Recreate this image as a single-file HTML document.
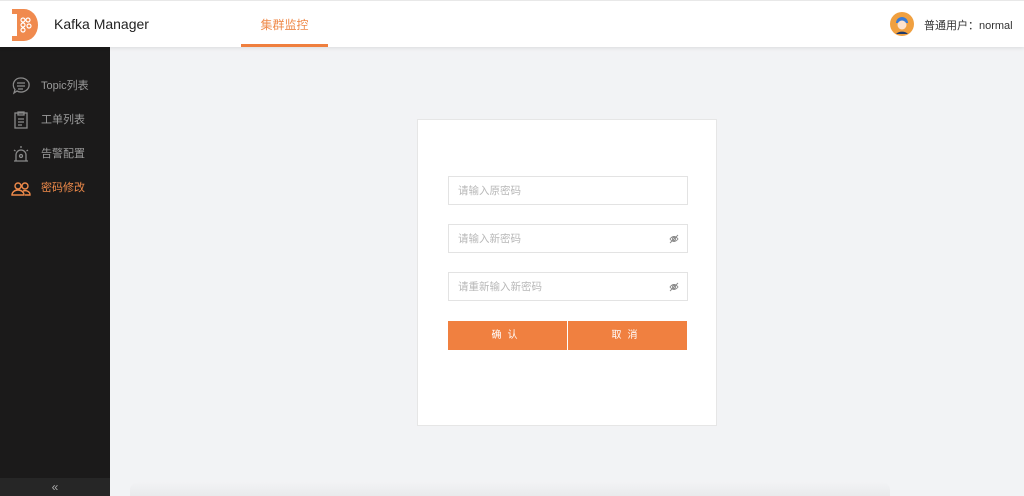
<!DOCTYPE html>
<html><head><meta charset="utf-8"><style>
*{margin:0;padding:0;box-sizing:border-box}
body{width:1024px;height:496px;overflow:hidden;background:#f2f3f5;font-family:"Liberation Sans","Noto Sans CJK SC",sans-serif;position:relative}
.hdr{position:absolute;left:0;top:0;width:1024px;height:47px;background:#fff;border-top:1px solid #e8e8e8;box-shadow:0 1px 4px rgba(0,0,0,.1);z-index:2}
.title{position:absolute;left:54px;top:15px;font-size:14px;color:#222}
.tab{position:absolute;left:241px;top:15px;width:87px;text-align:center;font-size:12px;color:#ef8a4a}
.tabline{position:absolute;left:241px;top:43px;width:87px;height:3px;background:#ef7f3e}
.user{position:absolute;left:924px;top:16px;font-size:11px;color:#333}
.side{position:absolute;left:0;top:47px;width:110px;height:449px;background:#1b1a1a}
.item{position:absolute;left:0;width:110px;height:20px;font-size:11px;color:#9a9a9a}
.item span{position:absolute;left:41px;top:1px}
.item svg{position:absolute;left:11px;top:0}
.coll{position:absolute;left:0;top:431px;width:110px;height:18px;background:#262626;color:#aaa;font-size:12px;text-align:center;line-height:18px}
.card{position:absolute;left:417px;top:119px;width:300px;height:307px;background:#fff;border:1px solid #e6e6e6}
.inp{position:absolute;left:30px;width:240px;height:29px;border:1px solid #e3e3e3;font-size:10.5px;color:#b8b8b8;padding:6px 0 0 9px}
.eye{position:absolute;right:8px;top:9px}
.btn{position:absolute;top:201px;width:119px;height:29px;background:#f08040;color:#fff;font-size:10px;text-align:center;line-height:29px;letter-spacing:6px}
.shadow{position:absolute;left:130px;top:482px;width:760px;height:14px;background:linear-gradient(#f2f3f5,#e9eaec);border-radius:8px 8px 0 0}
</style></head><body>
<div class="hdr">
<svg style="position:absolute;left:12px;top:8px" width="28" height="32" viewBox="0 0 28 32"><path d="M0 0h12a14 16 0 0 1 0 32H0z" fill="#f08a4e"/><path d="M0 5h5v22H0z" fill="#fff"/><g fill="none" stroke="#fff" stroke-width="1.2"><circle cx="11" cy="11" r="2"/><circle cx="16" cy="11" r="2"/><circle cx="11" cy="16" r="2"/><circle cx="17" cy="17" r="2"/><circle cx="11" cy="21" r="2"/></g></svg>
<div class="title">Kafka Manager</div>
<div class="tab">集群监控</div><div class="tabline"></div>
<svg style="position:absolute;left:890px;top:11px" width="24" height="24" viewBox="0 0 24 24"><circle cx="12" cy="12" r="12" fill="#f0a040"/><path d="M6 11a6 6 0 0 1 12 0z" fill="#3a7bd5"/><circle cx="12" cy="13" r="4.5" fill="#fde3cf"/><path d="M6 22a7 5 0 0 1 12 0z" fill="#1e3a6b"/></svg>
<div class="user">普通用户：normal</div>
</div>
<div class="side">
<div class="item" style="top:29px"><svg width="20" height="20" viewBox="0 0 20 20" fill="none" stroke="#8a8a8a" stroke-width="1.3"><path d="M10 2a8 7 0 1 1-4 13l-3 2 1-3.5A7 7 0 0 1 10 2z"/><path d="M6 7h8M6 10h8M7 13h5"/></svg><span>Topic列表</span></div>
<div class="item" style="top:63px"><svg width="20" height="20" viewBox="0 0 20 20" fill="none" stroke="#8a8a8a" stroke-width="1.3"><rect x="4" y="3" width="12" height="15"/><path d="M7 2h6v3H7zM7 9h6M7 12h6M7 15h4"/></svg><span>工单列表</span></div>
<div class="item" style="top:97px"><svg width="20" height="20" viewBox="0 0 20 20" fill="none" stroke="#8a8a8a" stroke-width="1.3"><path d="M5 17v-6a5 5 0 0 1 10 0v6M3 17h14M10 2v2M3 6l1.5 1M17 6l-1.5 1"/><circle cx="10" cy="12" r="1.5"/></svg><span>告警配置</span></div>
<div class="item" style="top:131px;color:#ef8a4a"><svg width="20" height="20" viewBox="0 0 20 20" fill="none" stroke="#ef8a4a" stroke-width="1.4"><circle cx="7" cy="8" r="3"/><circle cx="14" cy="8" r="3"/><path d="M1 17a6 5 0 0 1 12 0zM12 13a5 4 0 0 1 7 4h-5"/></svg><span>密码修改</span></div>
<div class="coll">«</div>
</div>
<div class="shadow"></div>
<div class="card">
<div class="inp" style="top:56px">请输入原密码</div>
<div class="inp" style="top:104px">请输入新密码<svg class="eye" width="10" height="10" viewBox="0 0 10 10" fill="none" stroke="#888" stroke-width="0.9"><path d="M1 5q4-5 8 0q-4 5-8 0z"/><circle cx="5" cy="5" r="1.5"/><path d="M1 9L9 1"/></svg></div>
<div class="inp" style="top:152px">请重新输入新密码<svg class="eye" width="10" height="10" viewBox="0 0 10 10" fill="none" stroke="#888" stroke-width="0.9"><path d="M1 5q4-5 8 0q-4 5-8 0z"/><circle cx="5" cy="5" r="1.5"/><path d="M1 9L9 1"/></svg></div>
<div class="btn" style="left:30px">确认</div>
<div class="btn" style="left:150px">取消</div>
</div>
</body></html>
